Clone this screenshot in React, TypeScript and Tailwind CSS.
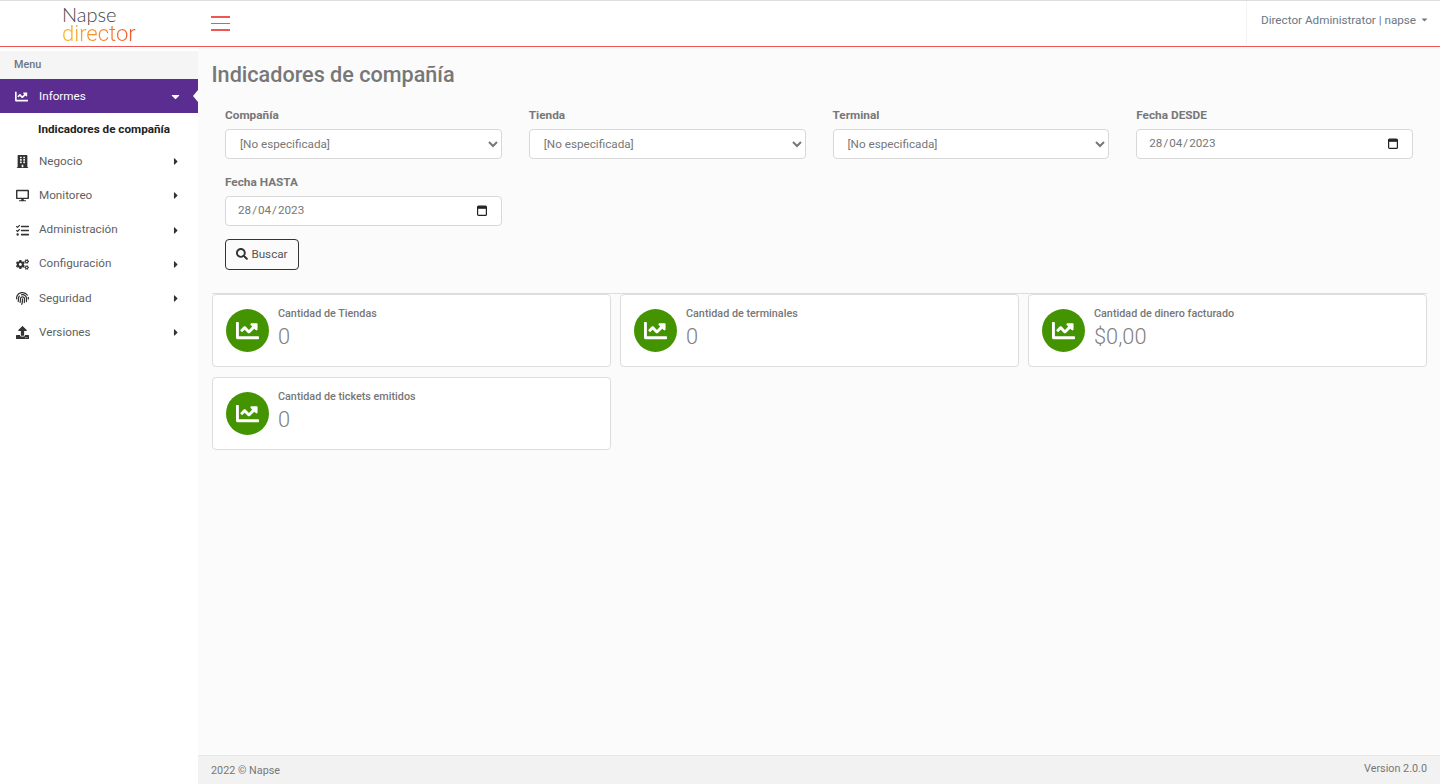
import React from "react";
import {
  FaBuilding,
  FaCaretDown,
  FaCaretRight,
  FaChartLine,
  FaCogs,
  FaDesktop,
  FaFingerprint,
  FaSearch,
  FaTasks,
  FaUpload,
} from "react-icons/fa";

const menu = [
  { label: "Negocio", icon: FaBuilding },
  { label: "Monitoreo", icon: FaDesktop },
  { label: "Administración", icon: FaTasks },
  { label: "Configuración", icon: FaCogs },
  { label: "Seguridad", icon: FaFingerprint },
  { label: "Versiones", icon: FaUpload },
];

const stats = [
  { label: "Cantidad de Tiendas", value: "0" },
  { label: "Cantidad de terminales", value: "0" },
  { label: "Cantidad de dinero facturado", value: "$0,00" },
  { label: "Cantidad de tickets emitidos", value: "0" },
];

function Sidebar() {
  return (
    <aside className="w-[198px] shrink-0 bg-white pt-[4px]">
      <div className="flex h-[28px] items-center bg-[#f5f5f5] pl-[14px] text-[10.8px] font-medium text-[#6b7785]">
        Menu
      </div>
      <div className="relative flex h-[34px] items-center bg-[#5c2d91] pl-[15px] pr-[16px] pt-[1px] text-[11.7px] text-white">
        <FaChartLine className="h-[13px] w-[13px]" />
        <span className="ml-[11px] flex-1">Informes</span>
        <FaCaretDown className="h-[13px] w-[13px]" />
        <span className="absolute right-0 top-[11px] border-y-[6px] border-r-[5px] border-y-transparent border-r-white" />
      </div>
      <div className="flex h-[31.6px] items-center pl-[38px] pt-[1px] text-[11.7px] font-bold text-[#222]">
        Indicadores de compañía
      </div>
      {menu.map((item) => (
        <div
          key={item.label}
          className="flex h-[34.2px] items-center pl-[15px] pr-[18px] text-[11.7px] text-[#5f5f5f]"
        >
          <span className="flex w-[14px] justify-center text-[#333]">
            <item.icon className="h-[13px] w-[13px]" />
          </span>
          <span className="ml-[10px] flex-1">{item.label}</span>
          <FaCaretRight className="h-[11px] w-[8px] text-[#333]" />
        </div>
      ))}
    </aside>
  );
}

function Field({ label, type }: { label: string; type: "select" | "date" }) {
  return (
    <div className="pl-[13px] pr-[14px]">
      <label className="block h-[22.6px] text-[11.8px] font-bold leading-[18px] text-[#777]">
        {label}
      </label>
      {type === "select" ? (
        <select className="h-[30.4px] w-full rounded-[4px] border border-[#d8d8d8] bg-white pl-[10px] text-[11.7px] text-[#777]">
          <option>[No especificada]</option>
        </select>
      ) : (
        <div className="flex h-[30.4px] w-full items-center justify-between rounded-[4px] border border-[#d8d8d8] bg-white pl-[12px] pr-[14px] text-[11.7px] text-[#777]">
          <span>
            28<span className="mx-[1px]">/</span>04<span className="mx-[1px]">/</span>2023
          </span>
          <svg width="10" height="11" viewBox="0 0 10 11" fill="none">
            <rect x="0.6" y="1.2" width="8.8" height="9.2" rx="1" stroke="#222" strokeWidth="1.2" />
            <rect x="0.6" y="1.2" width="8.8" height="2.6" fill="#222" />
          </svg>
        </div>
      )}
    </div>
  );
}

function StatCard({ label, value }: { label: string; value: string }) {
  return (
    <div className="flex h-[73.2px] items-start rounded-[4px] border border-[#ddd] bg-white pl-[13px] pt-[14px]">
      <div className="flex h-[43px] w-[43px] shrink-0 items-center justify-center rounded-full bg-[#439400] text-white">
        <FaChartLine className="h-[23px] w-[23px]" />
      </div>
      <div className="ml-[9px] -mt-[1px]">
        <div className="text-[10.8px] font-medium leading-[12px] text-[#777]">{label}</div>
        <div className="mt-[3px] text-[21.8px] font-light leading-[27px] text-[#808080]">{value}</div>
      </div>
    </div>
  );
}

export default function App() {
  return (
    <div className="flex h-[784px] flex-col overflow-hidden bg-[#fbfbfb] font-['Roboto',sans-serif]">
      <header className="flex h-[47px] shrink-0 items-stretch border-y border-t-[#ddd] border-b-[#ee5555] bg-white">
        <div className="flex w-[198px] flex-col pl-[62px] pt-[4px] leading-[19px]">
          <span className="font-['Lato',sans-serif] text-[20px] font-light text-[#444]">
            Napse
          </span>
          <span className="w-fit bg-gradient-to-r from-[#f7b81e] to-[#ee5030] bg-clip-text font-['Roboto',sans-serif] text-[22px] font-light leading-[20px] text-transparent">
            director
          </span>
        </div>
        <div className="flex flex-1 flex-col justify-center gap-[5.2px] pl-[13px]">
          <span className="h-[1.6px] w-[19px] bg-[#ee5555]" />
          <span className="h-[1.6px] w-[19px] bg-[#ee5555]" />
          <span className="h-[1.6px] w-[19px] bg-[#ee5555]" />
        </div>
        <div className="mb-[2px] flex w-[194px] items-start border-l border-[#f3f3f3] pl-[14px] pt-[11px] text-[11.7px] text-[#6b7785]">
          Director Administrator | napse
          <FaCaretDown className="ml-[4px] mt-[3px] h-[9px] w-[9px]" />
        </div>
      </header>
      <div className="flex flex-1">
        <Sidebar />
        <div className="flex flex-1 flex-col">
          <main className="flex-1 pl-[14px] pr-[13px]">
            <h1 className="-ml-[0.5px] pt-[13px] text-[21.6px] font-medium leading-[30px] text-[#777]">
              Indicadores de compañía
            </h1>
            <div className="mt-[16px] grid grid-cols-4 gap-y-[14px]">
              <Field label="Compañía" type="select" />
              <Field label="Tienda" type="select" />
              <Field label="Terminal" type="select" />
              <Field label="Fecha DESDE" type="date" />
              <Field label="Fecha HASTA" type="date" />
            </div>
            <button className="ml-[13px] mt-[13px] flex h-[31px] w-[74px] items-center justify-center gap-[3px] rounded-[4px] border border-[#333] text-[11.7px] text-[#555]">
              <FaSearch className="h-[12px] w-[12px] text-[#333]" />
              Buscar
            </button>
            <div className="mt-[23px] grid grid-cols-3 gap-x-[9px] gap-y-[9.4px] border-t border-[#ddd]">
              {stats.map((s) => (
                <StatCard key={s.label} label={s.label} value={s.value} />
              ))}
            </div>
          </main>
          <footer className="flex h-[29px] justify-between border-t border-[#e9e9e9] bg-[#f2f2f2] pl-[13px] pr-[13px] text-[10.8px] text-[#777]">
            <span className="pt-[7px]">2022 © Napse</span>
            <span className="pt-[5px]">Version 2.0.0</span>
          </footer>
        </div>
      </div>
    </div>
  );
}
